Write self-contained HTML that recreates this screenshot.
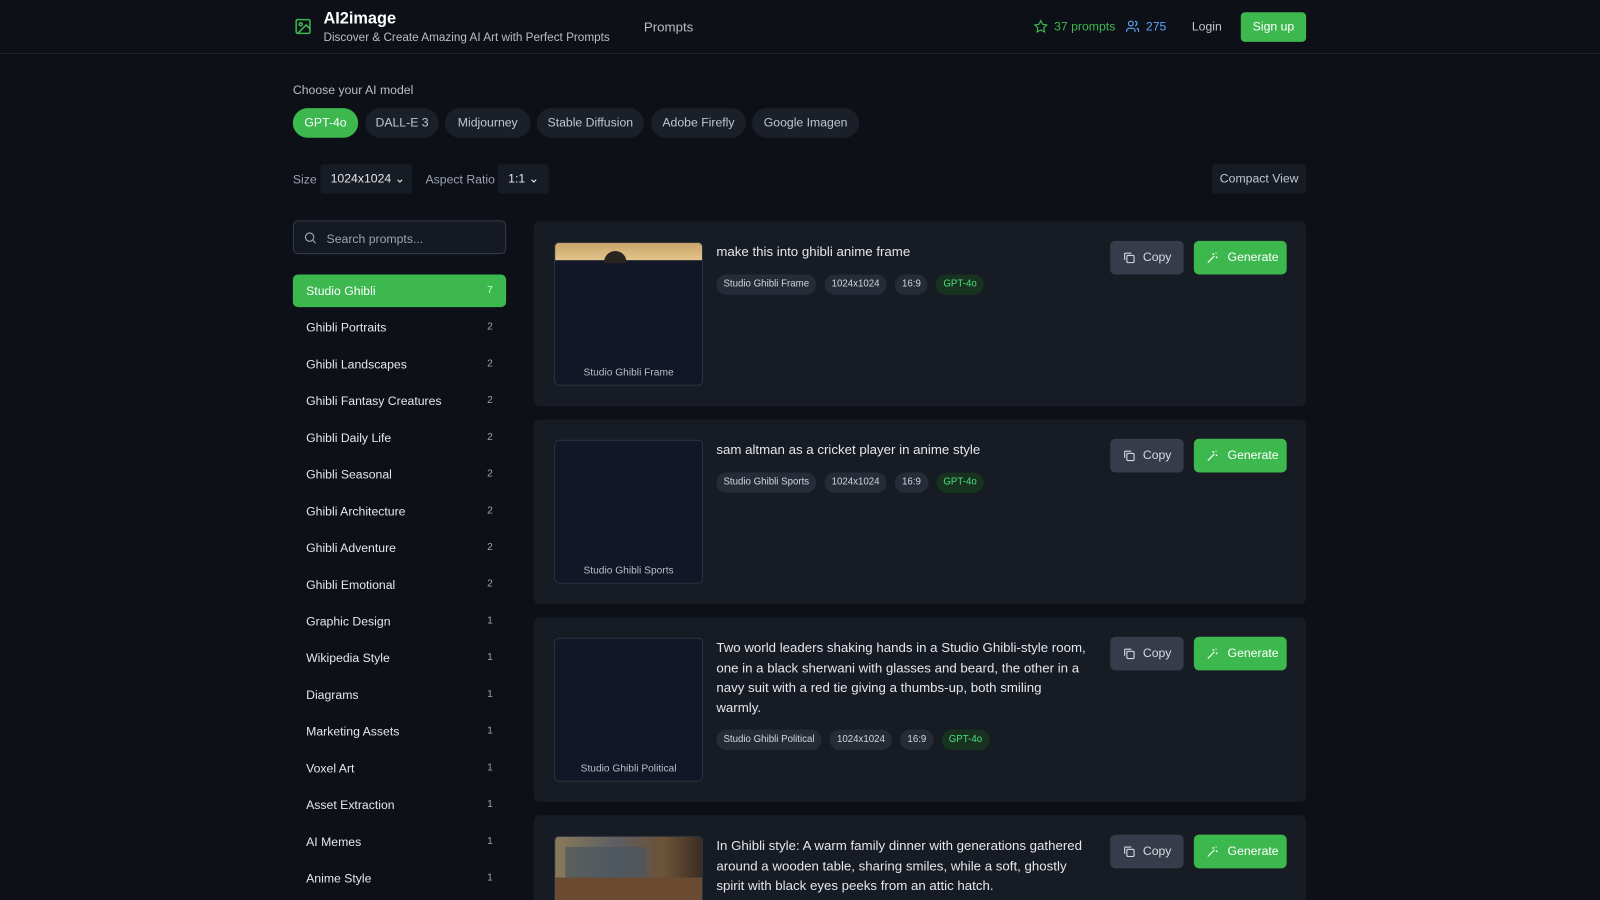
<!DOCTYPE html>
<html><head><meta charset="utf-8"><style>
*{box-sizing:border-box;margin:0;padding:0}
html,body{width:1600px;height:900px;overflow:hidden;background:#0d1017}
body{font-family:"Liberation Sans",sans-serif;color:#e5e7eb;position:relative}
#w{position:absolute;left:0;top:0;width:1568px;height:882px;overflow:hidden;transform:scale(1.0204);transform-origin:0 0}
.abs{position:absolute}
.hdr{position:absolute;left:0;top:0;width:1568px;height:53px;border-bottom:1px solid #1f242d}
.pill{position:absolute;top:106px;height:29px;border-radius:15px;background:#1a1f28;color:#c2c7cf;font-size:12px;line-height:29px;text-align:center}
.side{position:absolute;left:287px;width:209px;height:32px;font-size:12px;line-height:32px;padding:0 13px;color:#e5e7eb}
.side span{float:right;font-size:10px;color:#9ca3af}
.card{position:absolute;left:523px;width:757px;height:181px;background:#161b24;border-radius:6px;overflow:hidden}
.img{position:absolute;left:20px;top:20px;width:146px;height:141px;border:1px solid #2c3340;border-radius:5px;background:#111726;overflow:hidden}
.img .lab{position:absolute;bottom:6px;width:100%;text-align:center;font-size:10px;color:#b9bec6}
.title{position:absolute;left:179px;top:20px;width:380px;font-size:13px;line-height:19.5px;color:#e5e7eb;white-space:nowrap}
.tags{display:flex;gap:8px;margin-top:12px}
.tag{height:20px;line-height:20px;padding:0 7px;border-radius:10px;background:#262c37;font-size:9.5px;color:#d1d5db}
.tag.g{background:#17331f;color:#4ade80}
.copy{position:absolute;left:565px;top:19px;width:72px;height:33px;border-radius:5px;background:#363c49;font-size:12px;line-height:33px;color:#d7dbe0;padding-left:32px}
.gen{position:absolute;left:647px;top:19px;width:91px;height:33px;border-radius:5px;background:#3cb84f;font-size:12px;line-height:33px;color:#fff;padding-left:33px}
.copy svg,.gen svg{position:absolute;left:12px;top:10px}
</style></head><body><div id="w">
<div class="hdr">
<svg class="abs" style="left:288px;top:17px" width="18" height="18" viewBox="0 0 24 24" fill="none" stroke="#3cb84f" stroke-width="2"><rect x="3" y="3" width="18" height="18" rx="2"/><circle cx="9" cy="9" r="2"/><path d="M21 15l-5-5L5 21"/></svg>
<div class="abs" style="left:317px;top:10px;font-size:16px;font-weight:bold;color:#fff">AI2image</div>
<div class="abs" style="left:317px;top:31px;font-size:11.5px;color:#b9bec6">Discover &amp; Create Amazing AI Art with Perfect Prompts</div>
<div class="abs" style="left:631px;top:19px;font-size:13px;color:#b9bec6">Prompts</div>
<svg class="abs" style="left:1013px;top:19px" width="14" height="14" viewBox="0 0 24 24" fill="none" stroke="#3cb84f" stroke-width="2"><path d="M12 2l3.1 6.3 6.9 1-5 4.9 1.2 6.8L12 17.8 5.8 21l1.2-6.8-5-4.9 6.9-1z"/></svg>
<div class="abs" style="left:1033px;top:19px;font-size:12px;color:#3cb84f">37 prompts</div>
<svg class="abs" style="left:1103px;top:19px" width="14" height="14" viewBox="0 0 24 24" fill="none" stroke="#60a5fa" stroke-width="2"><circle cx="9" cy="7" r="4"/><path d="M2 21v-2a4 4 0 014-4h6a4 4 0 014 4v2M16 3.1a4 4 0 010 7.8M22 21v-2a4 4 0 00-3-3.9"/></svg>
<div class="abs" style="left:1123px;top:19px;font-size:12px;color:#60a5fa">275</div>
<div class="abs" style="left:1168px;top:19px;font-size:12px;color:#c2c7cf">Login</div>
<div class="abs" style="left:1216px;top:12px;width:64px;height:29px;border-radius:4px;background:#3cb84f;color:#fff;font-size:12px;line-height:29px;text-align:center">Sign up</div>
</div>
<div class="abs" style="left:287px;top:81px;font-size:12px;color:#b9bec6">Choose your AI model</div>
<div class="pill" style="left:287px;width:64px;background:#3cb84f;color:#fff">GPT-4o</div>
<div class="pill" style="left:358px;width:72px">DALL-E 3</div>
<div class="pill" style="left:436px;width:84px">Midjourney</div>
<div class="pill" style="left:526px;width:105px">Stable Diffusion</div>
<div class="pill" style="left:638px;width:93px">Adobe Firefly</div>
<div class="pill" style="left:737px;width:105px">Google Imagen</div>
<div class="abs" style="left:287px;top:169px;font-size:12px;color:#9ca3af">Size</div>
<div class="abs" style="left:314px;top:161px;width:90px;height:29px;background:#161b24;border-radius:3px;font-size:12px;line-height:29px;padding-left:10px;color:#e5e7eb">1024x1024 ⌄</div>
<div class="abs" style="left:417px;top:169px;font-size:12px;color:#9ca3af">Aspect Ratio</div>
<div class="abs" style="left:488px;top:161px;width:50px;height:29px;background:#161b24;border-radius:3px;font-size:12px;line-height:29px;padding-left:10px;color:#e5e7eb">1:1 ⌄</div>
<div class="abs" style="left:1188px;top:161px;width:92px;height:29px;background:#161b24;border-radius:3px;font-size:12px;line-height:29px;text-align:center;color:#c2c7cf">Compact View</div>
<div class="abs" style="left:287px;top:216px;width:209px;height:33px;border:1px solid #353b47;border-radius:5px;background:#141922"></div>
<svg class="abs" style="left:297px;top:226px" width="14" height="14" viewBox="0 0 24 24" fill="none" stroke="#9ca3af" stroke-width="2"><circle cx="11" cy="11" r="7"/><path d="M21 21l-4.3-4.3"/></svg>
<div class="abs" style="left:320px;top:227px;font-size:12px;color:#9ca3af">Search prompts...</div>
<div class="side" style="top:269px;background:#3cb84f;border-radius:5px;color:#fff">Studio Ghibli<span style="color:#d1fae5">7</span></div>
<div class="side" style="top:305px">Ghibli Portraits<span>2</span></div>
<div class="side" style="top:341px">Ghibli Landscapes<span>2</span></div>
<div class="side" style="top:377px">Ghibli Fantasy Creatures<span>2</span></div>
<div class="side" style="top:413px">Ghibli Daily Life<span>2</span></div>
<div class="side" style="top:449px">Ghibli Seasonal<span>2</span></div>
<div class="side" style="top:485px">Ghibli Architecture<span>2</span></div>
<div class="side" style="top:521px">Ghibli Adventure<span>2</span></div>
<div class="side" style="top:557px">Ghibli Emotional<span>2</span></div>
<div class="side" style="top:593px">Graphic Design<span>1</span></div>
<div class="side" style="top:629px">Wikipedia Style<span>1</span></div>
<div class="side" style="top:665px">Diagrams<span>1</span></div>
<div class="side" style="top:701px">Marketing Assets<span>1</span></div>
<div class="side" style="top:737px">Voxel Art<span>1</span></div>
<div class="side" style="top:773px">Asset Extraction<span>1</span></div>
<div class="side" style="top:809px">AI Memes<span>1</span></div>
<div class="side" style="top:845px">Anime Style<span>1</span></div>

<svg width="0" height="0" style="position:absolute"><defs>
<symbol id="cp" viewBox="0 0 24 24"><rect x="8" y="8" width="13" height="13" rx="2" fill="none" stroke="currentColor" stroke-width="2"/><path d="M4 16V5a1 1 0 011-1h11" fill="none" stroke="currentColor" stroke-width="2"/></symbol>
<symbol id="wd" viewBox="0 0 24 24"><path d="M3 21L15 9M13 4v3M11.5 5.5h3M19 10v3M17.5 11.5h3M18 3v2M17 4h2" fill="none" stroke="currentColor" stroke-width="2"/></symbol>
</defs></svg>

<div class="card" style="top:217px">
<div class="img"><div style="height:17px;background:linear-gradient(#c9a56a,#e2c48a)"></div><div style="position:absolute;left:48px;top:8px;width:22px;height:12px;border-radius:11px 11px 0 0;background:#2a2420"></div><div class="lab">Studio Ghibli Frame</div></div>
<div class="title">make this into ghibli anime frame<div class="tags"><div class="tag">Studio Ghibli Frame</div><div class="tag">1024x1024</div><div class="tag">16:9</div><div class="tag g">GPT-4o</div></div></div>
<div class="copy"><svg width="13" height="13" style="color:#d7dbe0"><use href="#cp"/></svg>Copy</div>
<div class="gen"><svg width="13" height="13" style="color:#fff"><use href="#wd"/></svg>Generate</div>
</div>
<div class="card" style="top:411px">
<div class="img"><div class="lab">Studio Ghibli Sports</div></div>
<div class="title">sam altman as a cricket player in anime style<div class="tags"><div class="tag">Studio Ghibli Sports</div><div class="tag">1024x1024</div><div class="tag">16:9</div><div class="tag g">GPT-4o</div></div></div>
<div class="copy"><svg width="13" height="13" style="color:#d7dbe0"><use href="#cp"/></svg>Copy</div>
<div class="gen"><svg width="13" height="13" style="color:#fff"><use href="#wd"/></svg>Generate</div>
</div>
<div class="card" style="top:605px">
<div class="img"><div class="lab">Studio Ghibli Political</div></div>
<div class="title">Two world leaders shaking hands in a Studio Ghibli-style room,<br>one in a black sherwani with glasses and beard, the other in a<br>navy suit with a red tie giving a thumbs-up, both smiling<br>warmly.<div class="tags"><div class="tag">Studio Ghibli Political</div><div class="tag">1024x1024</div><div class="tag">16:9</div><div class="tag g">GPT-4o</div></div></div>
<div class="copy"><svg width="13" height="13" style="color:#d7dbe0"><use href="#cp"/></svg>Copy</div>
<div class="gen"><svg width="13" height="13" style="color:#fff"><use href="#wd"/></svg>Generate</div>
</div>
<div class="card" style="top:799px;height:83px;border-radius:6px 6px 0 0">
<div class="img" style="height:80px;border-bottom:none;border-radius:5px 5px 0 0;background:linear-gradient(90deg,#8a7a5a 0%,#5d5f63 40%,#6b5236 75%,#3b2c22 100%)"><div style="position:absolute;left:10px;top:10px;width:80px;height:50px;background:#4a5560;opacity:.7"></div><div style="position:absolute;left:0;top:40px;width:146px;height:40px;background:#6b4a32"></div></div>
<div class="title">In Ghibli style: A warm family dinner with generations gathered<br>around a wooden table, sharing smiles, while a soft, ghostly<br>spirit with black eyes peeks from an attic hatch.</div>
<div class="copy"><svg width="13" height="13" style="color:#d7dbe0"><use href="#cp"/></svg>Copy</div>
<div class="gen"><svg width="13" height="13" style="color:#fff"><use href="#wd"/></svg>Generate</div>
</div>
</div></body></html>
